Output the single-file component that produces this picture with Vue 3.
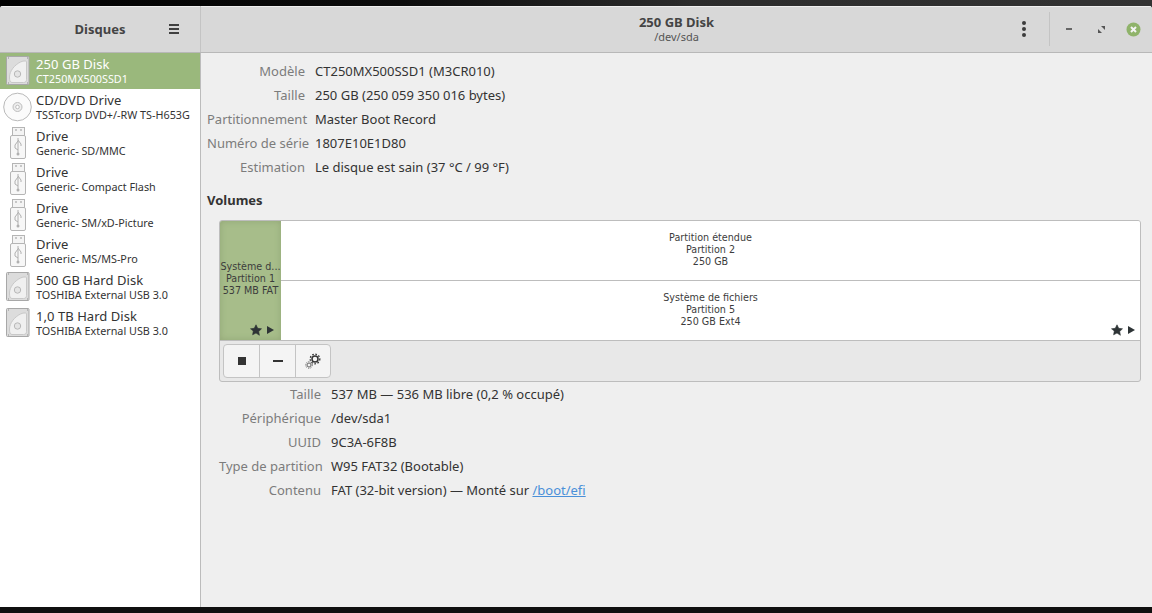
<script setup>
const disks = [
  { t: '250 GB Disk', s: 'CT250MX500SSD1', i: 'hd', sel: true },
  { t: 'CD/DVD Drive', s: 'TSSTcorp DVD+/-RW TS-H653G', i: 'cd' },
  { t: 'Drive', s: 'Generic- SD/MMC', i: 'usb' },
  { t: 'Drive', s: 'Generic- Compact Flash', i: 'usb' },
  { t: 'Drive', s: 'Generic- SM/xD-Picture', i: 'usb' },
  { t: 'Drive', s: 'Generic- MS/MS-Pro', i: 'usb' },
  { t: '500 GB Hard Disk', s: 'TOSHIBA External USB 3.0', i: 'hd' },
  { t: '1,0 TB Hard Disk', s: 'TOSHIBA External USB 3.0', i: 'hd' },
]
const info = [
  ['Modèle', 'CT250MX500SSD1 (M3CR010)'],
  ['Taille', '250 GB (250 059 350 016 bytes)'],
  ['Partitionnement', 'Master Boot Record'],
  ['Numéro de série', '1807E10E1D80'],
  ['Estimation', 'Le disque est sain (37 °C / 99 °F)'],
]
const vol = [
  ['Taille', '537 MB — 536 MB libre (0,2 % occupé)'],
  ['Périphérique', '/dev/sda1'],
  ['UUID', '9C3A-6F8B'],
  ['Type de partition', 'W95 FAT32 (Bootable)'],
]
</script>

<template>
  <div class="screen">
    <div class="desk top"></div>
    <div class="win">
      <header class="head">
        <div class="head-left">
          <span class="app-title">Disques</span>
          <svg class="burger" width="12" height="10" viewBox="0 0 12 10"><path d="M1 0h10v2H1zM1 4h10v2H1zM1 8h10v2H1z" fill="#404040"/></svg>
        </div>
        <div class="head-main">
          <div class="title-box">
            <div class="t1">250 GB Disk</div>
            <div class="t2">/dev/sda</div>
          </div>
          <div class="head-actions">
            <svg width="6" height="16" viewBox="0 0 6 16"><circle cx="3" cy="2" r="2" fill="#3c3c3c"/><circle cx="3" cy="8" r="2" fill="#3c3c3c"/><circle cx="3" cy="14" r="2" fill="#3c3c3c"/></svg>
            <span class="vsep"></span>
            <span class="wbtn first"><svg width="6" height="2"><rect width="6" height="2" fill="#666"/></svg></span>
            <span class="wbtn"><svg width="7" height="7" viewBox="0 0 7 7"><path d="M3 0h4v4zM0 3l4 4H0z" fill="#555"/></svg></span>
            <span class="wbtn"><svg width="15" height="15" viewBox="0 0 15 15"><circle cx="7.5" cy="7.5" r="7" fill="#8fb36a"/><path d="M5 5l5 5M10 5l-5 5" stroke="#f4f4f4" stroke-width="2"/></svg></span>
          </div>
        </div>
      </header>
      <div class="body">
        <aside class="side">
          <div v-for="d in disks" :key="d.t + d.s" class="row" :class="{ sel: d.sel }">
            <svg v-if="d.i === 'hd'" class="ic" width="32" height="32" viewBox="0 0 32 32">
              <rect x="6.500" y="1.500" width="22.500" height="28" rx="1" fill="#dcdcdc" stroke="#a8a8a8"/>
              <path d="M9.500 22c0-6 5-12 11-15 2-1 5-1.500 6-.5v18c0 2-1 3-3 3H12c-2 0-2.500-2-2.500-5.500z" fill="#f0f0f0" stroke="#c8c8c8"/>
              <circle cx="17.500" cy="19" r="3.200" fill="#e4e4e4" stroke="#b8b8b8"/>
              <path d="M8 3h1M27 3h1M8 28h1M27 28h1" stroke="#8c8c8c"/>
            </svg>
            <svg v-else-if="d.i === 'cd'" class="ic" width="32" height="32" viewBox="0 0 32 32">
              <circle cx="17.500" cy="16" r="13.800" fill="#fbfbfb" stroke="#b9b9b9"/>
              <circle cx="17.500" cy="16" r="4.500" fill="#eee" stroke="#bdbdbd"/>
              <circle cx="17.500" cy="16" r="1.800" fill="#fff" stroke="#bdbdbd"/>
            </svg>
            <svg v-else class="ic" width="32" height="32" viewBox="0 0 32 32">
              <rect x="12.500" y="0.500" width="12" height="8" fill="#f4f4f4" stroke="#b5b5b5"/>
              <path d="M15 3h2M20 3h2" stroke="#999"/>
              <rect x="10.500" y="8.500" width="15" height="23" rx="1.500" fill="#f7f7f7" stroke="#b5b5b5"/>
              <path d="M18 11v16M18 14l-3 4v3l3 2M18 13l3 4v2" fill="none" stroke="#b0b0b0"/>
              <circle cx="18" cy="27" r="1.500" fill="#b0b0b0"/>
            </svg>
            <div class="row-txt">
              <div class="rt">{{ d.t }}</div>
              <div class="rs">{{ d.s }}</div>
            </div>
          </div>
        </aside>
        <main class="main">
          <div class="grid g1">
            <template v-for="r in info" :key="r[0]">
              <span class="lbl">{{ r[0] }}</span><span class="val">{{ r[1] }}</span>
            </template>
          </div>
          <h2 class="vol-h">Volumes</h2>
          <div class="volbox">
            <div class="vis">
              <div class="p1">
                <div class="ptxt"><div>Système d...</div><div>Partition 1</div><div>537 MB FAT</div></div>
                <div class="marks m1">
                  <svg width="12" height="12" viewBox="0 0 12 12"><path d="M6 .8l1.700 3.500 3.800.5-2.800 2.700.7 3.800L6 9l-3.400 1.800.7-3.800L.5 4.800l3.800-.5z" fill="#2e3436" stroke="#2e3436" stroke-width=".6"/></svg>
                  <svg width="8" height="8" viewBox="0 0 8 8"><path d="M1 0l7 4-7 4z" fill="#2e3436"/></svg>
                </div>
              </div>
              <div class="pr">
                <div class="pa"><div>Partition étendue</div><div>Partition 2</div><div>250 GB</div></div>
                <div class="pb">
                  <div><div>Système de fichiers</div><div>Partition 5</div><div>250 GB Ext4</div></div>
                  <div class="marks">
                    <svg width="12" height="12" viewBox="0 0 12 12"><path d="M6 .8l1.700 3.500 3.800.5-2.800 2.700.7 3.800L6 9l-3.400 1.800.7-3.800L.5 4.800l3.800-.5z" fill="#2e3436" stroke="#2e3436" stroke-width=".6"/></svg>
                    <svg width="8" height="8" viewBox="0 0 8 8"><path d="M1 0l7 4-7 4z" fill="#2e3436"/></svg>
                  </div>
                </div>
              </div>
            </div>
            <div class="tools">
              <div class="btns">
                <button class="b"><svg width="8" height="8"><rect width="8" height="8" fill="#333"/></svg></button>
                <button class="b"><svg width="10" height="2"><rect width="10" height="2" fill="#333"/></svg></button>
                <button class="b">
                  <svg width="16" height="16" viewBox="0 0 16 16">
                    <circle cx="10" cy="6" r="3" fill="none" stroke="#333" stroke-width="1.500"/>
                    <circle cx="10" cy="6" r="4.800" fill="none" stroke="#333" stroke-width="1.300" stroke-dasharray="1.600 1.600"/>
                    <circle cx="4" cy="12" r="2" fill="none" stroke="#666" stroke-width="1"/>
                    <circle cx="4" cy="12" r="3.300" fill="none" stroke="#666" stroke-width="1" stroke-dasharray="1.200 1.200"/>
                  </svg>
                </button>
              </div>
            </div>
          </div>
          <div class="grid g2">
            <template v-for="r in vol" :key="r[0]">
              <span class="lbl">{{ r[0] }}</span><span class="val">{{ r[1] }}</span>
            </template>
            <span class="lbl">Contenu</span>
            <span class="val">FAT (32-bit version) — Monté sur <a class="lnk">/boot/efi</a></span>
          </div>
        </main>
      </div>
    </div>
    <div class="desk bot"></div>
  </div>
</template>

<style>
html, body { margin: 0; padding: 0; overflow: hidden; background: #111; }
</style>

<style scoped>
.screen { width: 1152px; height: 613px; display: flex; flex-direction: column; font-family: "Noto Sans", sans-serif; color: #333; overflow: hidden; }
.desk { flex: none; height: 6px; }
.top { background: linear-gradient(90deg, #000 0, #0c0c0c 35%, #2c2c2c 60%, #333 100%); }
.bot { background: #101010; }
.win { flex: 1; display: flex; flex-direction: column; min-height: 0; background: #efefef; border-radius: 3px 3px 0 0; overflow: hidden; }
.head { flex: none; height: 46px; display: flex; background: #d8d8d8; border-bottom: 1px solid #b8b8b8; box-shadow: inset 0 1px 0 #efefef; }
.head-left { width: 201px; flex: none; box-sizing: border-box; border-right: 1px solid #c4c4c4; position: relative; display: flex; align-items: center; justify-content: center; }
.app-title { font-weight: 700; font-size: 13px; color: #444; }
.burger { position: absolute; left: 168px; top: 18px; }
.head-main { flex: 1; display: flex; align-items: center; position: relative; justify-content: center; }
.title-box { text-align: center; line-height: 15px; padding-top: 1px; }
.t1 { font-weight: 700; font-size: 13px; color: #444; }
.t2 { font-size: 11px; color: #555; line-height: 14px; }
.head-actions { position: absolute; right: 3px; top: 6px; height: 34px; display: flex; align-items: center; }
.vsep { width: 1px; height: 34px; background: #c4c4c4; margin: 0 0 0 22px; }
.wbtn { width: 32px; display: flex; justify-content: center; align-items: center; }
.first { margin-left: 3px; }
.body { flex: 1; display: flex; min-height: 0; }
.side { width: 201px; flex: none; box-sizing: border-box; background: #fff; border-right: 1px solid #bcbcbc; }
.row { height: 36px; display: flex; align-items: center; box-sizing: border-box; color: #333; }
.row.sel { background: #9ab87c; color: #fff; }
.ic { flex: none; margin-right: 4px; }
.row-txt { line-height: 15px; white-space: nowrap; padding-top: 1px; }
.rt { font-size: 13px; letter-spacing: .05px; }
.rs { font-size: 10.800px; line-height: 14px; }
.main { flex: 1; min-width: 0; box-sizing: border-box; padding: 6px 11px 0 6px; }
.grid { display: grid; grid-auto-rows: 24px; column-gap: 10px; align-items: center; font-size: 13px; }
.g1 { grid-template-columns: 98px 1fr; }
.g2 { grid-template-columns: 102px 1fr; margin-left: 12px; }
.lbl { text-align: right; color: #7c7c7c; white-space: nowrap; }
.val { color: #333; white-space: nowrap; }
.lnk { color: #4a90d9; text-decoration: underline; }
.vol-h { margin: 12px 0 11px; font-size: 13px; font-weight: 700; line-height: 18px; color: #333; }
.volbox { margin-left: 12px; border: 1px solid #bdbdbd; border-radius: 3px; background: #e8e8e8; height: 162px; box-sizing: border-box; overflow: hidden; }
.vis { display: flex; height: 119px; border-bottom: 1px solid #bdbdbd; font-family: "DejaVu Sans", sans-serif; font-size: 9.600px; line-height: 12px; text-align: center; color: #3c3c3c; }
.p1 { width: 61px; flex: none; box-sizing: border-box; padding-bottom: 4px; background: #a7bd8a; position: relative; display: flex; align-items: center; justify-content: center; box-shadow: inset 0 0 6px rgba(80,100,60,.25); }
.ptxt { width: 61px; white-space: nowrap; }
.marks { position: absolute; right: 5px; bottom: 4px; display: flex; align-items: center; gap: 4px; }
.m1 { right: 7px; }
.pr { flex: 1; background: #fff; display: flex; flex-direction: column; }
.pa { height: 59px; box-sizing: content-box; border-bottom: 1px solid #bdbdbd; display: flex; flex-direction: column; justify-content: center; padding-bottom: 0; position: relative; top: 0; }
.pa > div:first-child { margin-top: -2px; }
.pb { flex: 1; position: relative; display: flex; align-items: center; justify-content: center; padding-bottom: 2px; box-sizing: border-box; }
.tools { padding: 3px; }
.btns { display: inline-flex; border: 1px solid #c4c4c4; border-radius: 4px; background: #f4f4f4; height: 32px; }
.b { width: 36px; height: 32px; border: 0; padding: 0; background: transparent; display: flex; align-items: center; justify-content: center; border-left: 1px solid #c4c4c4; }
.b:first-child { border-left: 0; width: 35px; }
.b:last-child { width: 35px; }
</style>
